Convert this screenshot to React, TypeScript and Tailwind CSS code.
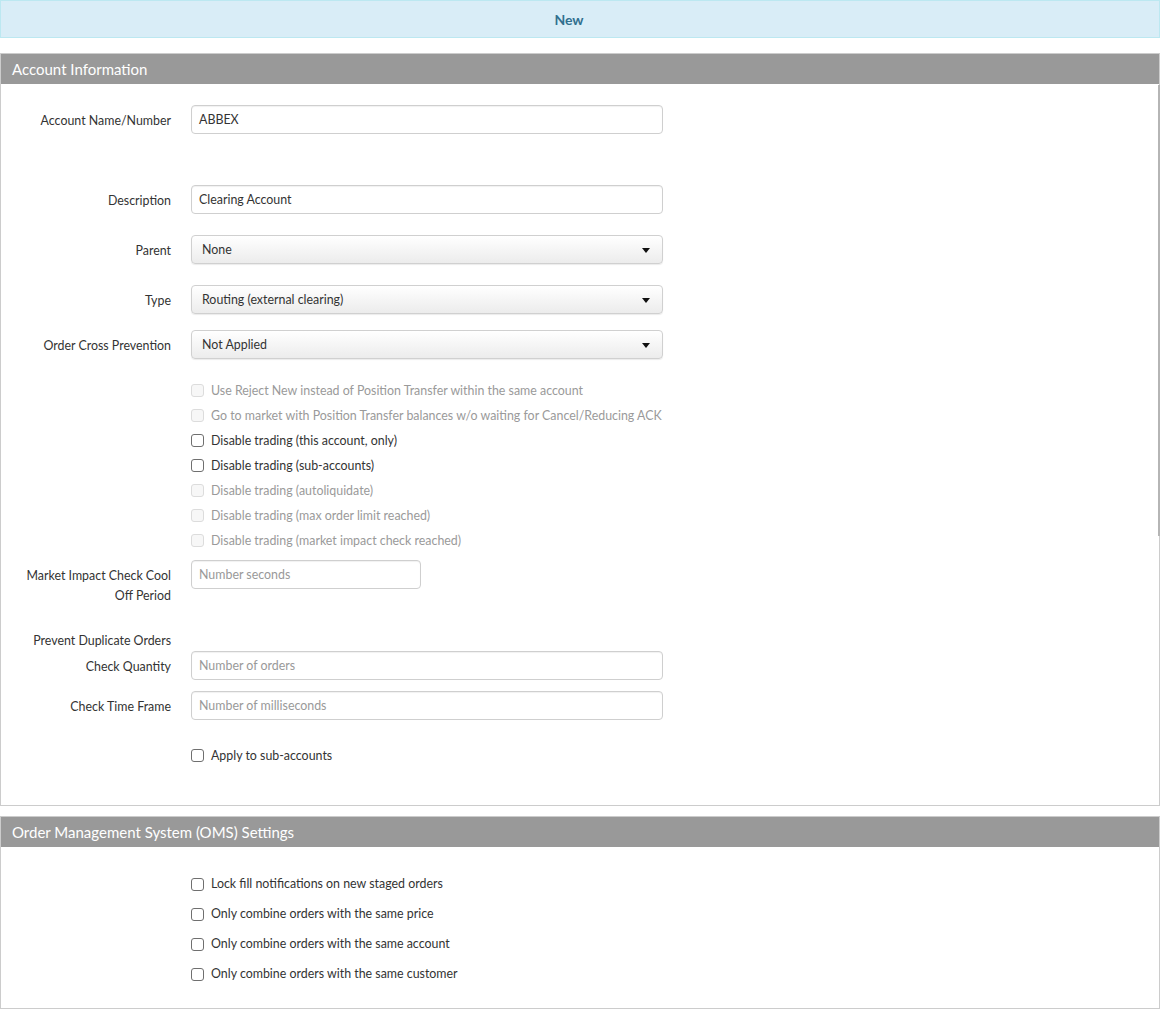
import React from "react";

const font = { fontFamily: "Lato, 'Open Sans', sans-serif" };

function Label({ children }: { children: React.ReactNode }) {
  return (
    <div className="w-[170px] shrink-0 text-right leading-[20px] pt-[6px] text-[12.4px] text-[#333]">
      {children}
    </div>
  );
}

function TextInput({ value, placeholder, w = "w-[472px]" }: { value?: string; placeholder?: string; w?: string }) {
  return (
    <div
      className={`${w} h-[29px] ml-[20px] flex items-center pl-[7px] pt-[2px] rounded-[4px] border border-[#cfcfcf] bg-white shadow-[inset_0_1px_1px_rgba(0,0,0,0.06)] text-[12.4px] ${
        value ? "text-[#333]" : "text-[#999]"
      }`}
    >
      {value ?? placeholder}
    </div>
  );
}

function Select({ value }: { value: string }) {
  return (
    <div className="w-[472px] h-[29px] ml-[20px] flex items-center justify-between pl-[10px] pr-[12px] pt-[2px] rounded-[4px] border border-[#d0d0d0] bg-gradient-to-b from-white to-[#ececec] shadow-[0_1px_1px_rgba(0,0,0,0.08)] text-[12.4px] text-[#333]">
      <span>{value}</span>
      <span className="w-0 h-0 border-l-[4px] border-r-[4px] border-t-[5px] border-l-transparent border-r-transparent border-t-[#111]" />
    </div>
  );
}

function Check({ label, disabled, h = "h-[25px]" }: { label: string; disabled?: boolean; h?: string }) {
  return (
    <div className={`${h} flex items-center pl-[190px]`}>
      <span
        className={`w-[13px] h-[13px] rounded-[3px] border ${
          disabled ? "border-[#dcdcdc] bg-[#f7f7f7]" : "border-[#6f6f6f] bg-white"
        }`}
      />
      <span className={`ml-[7px] pt-[1px] text-[12.4px] ${disabled ? "text-[#9a9a9a]" : "text-[#333]"}`}>{label}</span>
    </div>
  );
}

function PanelHeader({ title }: { title: string }) {
  return (
    <div className="h-[30px] bg-[#999999] flex items-center pl-[11px] text-white text-[15px]">{title}</div>
  );
}

export default function App() {
  return (
    <div className="w-[1160px] bg-white" style={font}>
      <div className="h-[38px] border border-[#bce8f1] bg-[#d9edf7] flex items-center justify-center pr-[22px] text-[#31708f] font-bold text-[14px]">
        New
      </div>

      <div className="relative mt-[15px] border border-[#cccccc]">
        <PanelHeader title="Account Information" />
        <div className="absolute right-[-1px] top-[31px] h-[451px] w-[2px] bg-[#b5b5b5]" />
        <div className="pt-[21px] pb-[37px]">
          <div className="flex">
            <Label>Account Name/Number</Label>
            <TextInput value="ABBEX" />
          </div>
          <div className="flex mt-[51px]">
            <Label>Description</Label>
            <TextInput value="Clearing Account" />
          </div>
          <div className="flex mt-[21px]">
            <Label>Parent</Label>
            <Select value="None" />
          </div>
          <div className="flex mt-[21px]">
            <Label>Type</Label>
            <Select value="Routing (external clearing)" />
          </div>
          <div className="flex mt-[16px]">
            <Label>Order Cross Prevention</Label>
            <Select value="Not Applied" />
          </div>
          <div className="mt-[19px]">
            <Check disabled label="Use Reject New instead of Position Transfer within the same account" />
            <Check disabled label="Go to market with Position Transfer balances w/o waiting for Cancel/Reducing ACK" />
            <Check label="Disable trading (this account, only)" />
            <Check label="Disable trading (sub-accounts)" />
            <Check disabled label="Disable trading (autoliquidate)" />
            <Check disabled label="Disable trading (max order limit reached)" />
            <Check disabled label="Disable trading (market impact check reached)" />
          </div>
          <div className="flex mt-[7px]">
            <Label>
              Market Impact Check Cool
              <br />
              Off Period
            </Label>
            <TextInput placeholder="Number seconds" w="w-[230px]" />
          </div>
          <div className="flex mt-[19px]">
            <Label>Prevent Duplicate Orders</Label>
          </div>
          <div className="flex mt-[0px]">
            <Label>Check Quantity</Label>
            <TextInput placeholder="Number of orders" />
          </div>
          <div className="flex mt-[11px]">
            <Label>Check Time Frame</Label>
            <TextInput placeholder="Number of milliseconds" />
          </div>
          <div className="mt-[23px]">
            <Check label="Apply to sub-accounts" />
          </div>
        </div>
      </div>

      <div className="mt-[10px] border border-[#cccccc]">
        <PanelHeader title="Order Management System (OMS) Settings" />
        <div className="pt-[22px] pb-[19px]">
          <Check h="h-[30px]" label="Lock fill notifications on new staged orders" />
          <Check h="h-[30px]" label="Only combine orders with the same price" />
          <Check h="h-[30px]" label="Only combine orders with the same account" />
          <Check h="h-[30px]" label="Only combine orders with the same customer" />
        </div>
      </div>
    </div>
  );
}
